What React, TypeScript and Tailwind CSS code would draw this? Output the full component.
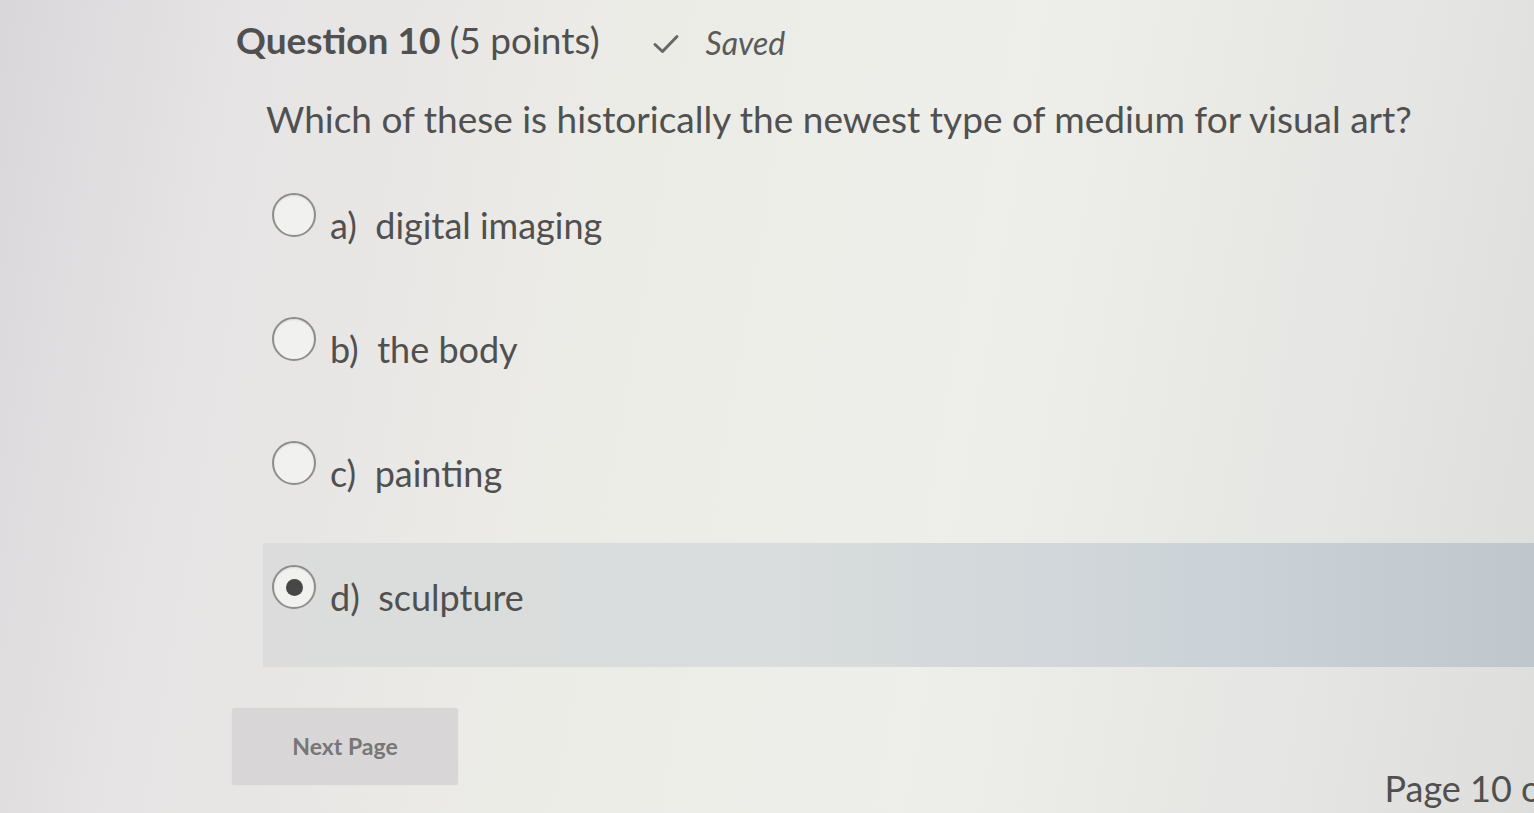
import React from 'react'

const options = [
  { letter: 'a)', label: 'digital imaging' },
  { letter: 'b)', label: 'the body' },
  { letter: 'c)', label: 'painting' },
  { letter: 'd)', label: 'sculpture' },
]

function Radio({ checked }: { checked: boolean }) {
  return (
    <span className="flex h-[44px] w-[44px] shrink-0 items-center justify-center rounded-full border-2 border-[#8d8d8d] bg-[#f1f1ef] shadow-[inset_0_1px_2px_rgba(0,0,0,0.08)]">
      {checked && <span className="h-[17px] w-[17px] rounded-full bg-[#474747]" />}
    </span>
  )
}

// One quiz question page, selected answer is d)
export default function App() {
  const selected = 3

  return (
    <div
      className="relative h-[813px] w-[1534px] overflow-hidden bg-[linear-gradient(100deg,#d9d7da_0%,#e6e3e4_14%,#ecece7_40%,#eeeeea_62%,#e5e5e3_85%,#dddddc_100%)] text-[#505050]"
      style={{ fontFamily: 'Lato, "Open Sans", sans-serif' }}
    >
      <div className="flex flex-col pl-[236px] pt-[16px]">
        <div className="flex items-baseline">
          <h1 className="text-[37px] font-bold leading-[48px]">
            Question 10 <span className="font-normal">(5 points)</span>
          </h1>
          <span className="ml-[52px] flex items-center gap-[26px] text-[32px] italic text-[#5a5a5a]">
            <svg width="28" height="22" viewBox="0 0 28 22" fill="none" className="translate-y-[1px]">
              <path d="M3 11.5 L10.5 18.5 L25 3.5" stroke="#666" strokeWidth="3" strokeLinecap="round" strokeLinejoin="round" />
            </svg>
            Saved
          </span>
        </div>

        <p className="ml-[30px] mt-[28px] text-[37px] leading-[48px]">
          Which of these is historically the newest type of medium for visual art?
        </p>

        <div className="mt-[28px] flex flex-col">
          {options.map((o, i) => (
            <div
              key={o.letter}
              className={
                'ml-[27px] flex h-[124px] items-start gap-[14px] pl-[9px] pt-[22px] ' +
                (i === selected
                  ? 'bg-[linear-gradient(90deg,#dcdcdc_0%,#d9dddd_40%,#ccd3d8_75%,#bfc7cc_100%)]'
                  : '')
              }
            >
              <Radio checked={i === selected} />
              <span className="mt-[8px] text-[36px] leading-[48px]">
                {o.letter}&nbsp; {o.label}
              </span>
            </div>
          ))}
        </div>

        <div className="mt-[41px] flex items-end justify-between">
          <button className="flex h-[77px] w-[226px] -translate-x-[4px] items-center justify-center rounded-[3px] bg-[#d9d6d8] text-[23px] font-bold text-[#777777] shadow-[0_0_2px_rgba(0,0,0,0.06)]">
            Next Page
          </button>
          <span className="mb-[-30px] mr-[-70px] whitespace-nowrap text-[36px]">Page 10 of 10</span>
        </div>
      </div>
    </div>
  )
}
